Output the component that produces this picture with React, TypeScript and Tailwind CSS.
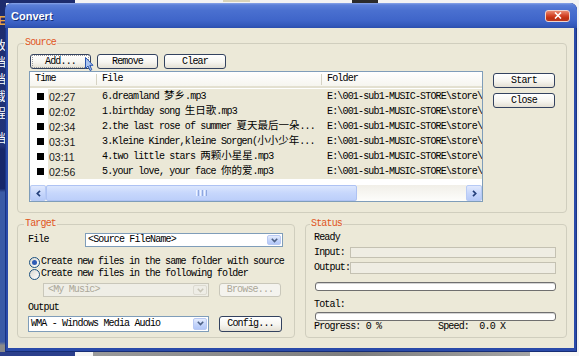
import React from "react";

const CJK = /([\u3000-\u9fff\uff00-\uffef]+)/;

function T({ s }: { s: string }) {
  const parts = s.split(CJK);
  return (
    <>
      {parts.map((p, i) =>
        /[\u3000-\u9fff\uff00-\uffef]/.test(p) ? (
          <span key={i} className="text-[10.5px] tracking-[0px]">
            {p}
          </span>
        ) : (
          <React.Fragment key={i}>{p}</React.Fragment>
        )
      )}
    </>
  );
}

const rows: [string, string][] = [
  ["02:27", "6.dreamland 梦乡.mp3"],
  ["02:02", "1.birthday song 生日歌.mp3"],
  ["02:34", "2.the last rose of summer 夏天最后一朵..."],
  ["03:31", "3.Kleine Kinder,kleine Sorgen(小小少年..."],
  ["03:11", "4.two little stars 两颗小星星.mp3"],
  ["02:56", "5.your love, your face 你的爱.mp3"],
];

function Btn({ className, children, disabled }: { className: string; children: React.ReactNode; disabled?: boolean }) {
  return (
    <div
      className={
        "flex items-center justify-center rounded-[3px] border shrink-0 " +
        (disabled
          ? "border-[#c9c7ba] bg-[#f4f3ee] text-[#aca899] "
          : "border-[#33425f] bg-[linear-gradient(to_bottom,#ffffff_0%,#f6f5f0_55%,#e4e0d4_100%)] text-black ") +
        className
      }
    >
      {children}
    </div>
  );
}

function DropBtn({ disabled }: { disabled?: boolean }) {
  return (
    <div
      className={
        "w-[14px] h-full rounded-[2px] border flex items-center justify-center shrink-0 " +
        (disabled
          ? "border-[#dcdad0] bg-[#eeede6]"
          : "border-[#b9c9f3] bg-[linear-gradient(to_bottom,#e6edfd_0%,#c6d6fb_50%,#b2c7f8_100%)]")
      }
    >
      <svg width="7" height="5" viewBox="0 0 7 5">
        <path d="M0.8 0.8 L3.5 3.6 L6.2 0.8" fill="none" stroke={disabled ? "#c9c6b8" : "#4d6185"} strokeWidth="1.6" />
      </svg>
    </div>
  );
}

function Radio({ checked }: { checked?: boolean }) {
  return (
    <div className="w-[11px] h-[11px] rounded-full border border-[#1c5180] bg-[linear-gradient(135deg,#d9d8d0,#ffffff)] flex items-center justify-center shrink-0">
      {checked && <div className="w-[5px] h-[5px] rounded-full bg-[#2d5bb5]" />}
    </div>
  );
}

function Group({ label, className, labelClass, children }: { label: string; className: string; labelClass: string; children: React.ReactNode }) {
  return (
    <div className={"border border-[#d0cebe] rounded-[4px] flex flex-col " + className}>
      <div className={"-mt-[7px] self-start px-[1px] bg-[#ece9d8] text-[#e0561e] leading-[12px] " + labelClass}>{label}</div>
      {children}
    </div>
  );
}

function ScrollArrow({ dir }: { dir: "l" | "r" }) {
  return (
    <div className="w-[16px] h-full rounded-[2px] border border-[#b7caf5] bg-[linear-gradient(to_bottom,#e1e9fd_0%,#c5d5fb_55%,#b6caf8_100%)] flex items-center justify-center shrink-0">
      <svg width="5" height="7" viewBox="0 0 5 7">
        <path d={dir === "l" ? "M4 0.8 L1.3 3.5 L4 6.2" : "M1 0.8 L3.7 3.5 L1 6.2"} fill="none" stroke="#233f7a" strokeWidth="1.7" />
      </svg>
    </div>
  );
}

export default function App() {
  return (
    <div className="relative w-[579px] h-[356px] overflow-hidden bg-[#f3f3f3] font-['Liberation_Mono','Noto_Sans_CJK_SC',monospace] text-[10px] leading-[12px] tracking-[-0.83px] text-black">
      {/* desktop background */}
      <div className="absolute left-0 top-0 w-[75px] h-[3px] bg-[#1d2c6d]" />
      <div className="absolute left-[223px] top-0 w-[27px] h-[2px] bg-[#d9d3b8]" />
      <div className="absolute left-[352px] top-0 w-[26px] h-[3px] bg-[#2b2b2b]" />
      <div className="absolute left-0 top-0 w-[6px] h-full overflow-hidden bg-[linear-gradient(to_bottom,#1d2c6d_0%,#213479_41%,#16276a_42%,#16276a_53%,#3a5aa6_54%,#3a5aa6_96%,#8a8a8a_97%)]">
        <div className="absolute right-0 top-[13px] flex flex-col items-end font-['Noto_Sans_CJK_SC',sans-serif] text-[12px] leading-[17px] tracking-normal text-white">
          <span className="font-['Liberation_Sans',sans-serif] font-bold text-[#e8a640]">E</span>
          <span className="mt-[6px]">改</span>
          <span>档</span>
          <span>档</span>
          <span>载</span>
          <span>程</span>
          <span className="mt-[8px]">档</span>
        </div>
      </div>
      <div className="absolute left-0 bottom-0 w-full h-[4px] flex">
        <div className="w-[75px] bg-[#2b3f8c]" />
        <div className="w-[18px] bg-[#f4f4f4]" />
        <div className="flex-1 bg-[linear-gradient(to_right,#9a9a9a,#7d7d7d_60%,#a5a5a5)]" />
        <div className="w-[49px] bg-[#f7f7f7]" />
      </div>

      {/* window */}
      <div className="absolute left-[5px] top-[3px] w-[572px] h-[349px] flex flex-col rounded-t-[7px] bg-[#2a4aa9] shadow-[inset_1px_0_0_#1a3585,inset_-1px_0_0_#1a3585,inset_0_-1px_0_#162d75]">
        <div className="h-[25px] shrink-0 rounded-t-[7px] bg-[linear-gradient(to_bottom,#8aa5e8_0%,#5b7fd8_8%,#4a70d0_30%,#3f65c9_70%,#3459bb_90%,#2c4fae_100%)] flex items-center justify-between pl-[6px] pr-[7px]">
          <span className="font-['Liberation_Sans',Arial,sans-serif] font-bold text-[11px] tracking-normal text-white [text-shadow:1px_1px_0_#14307a]">Convert</span>
          <div className="w-[25px] h-[12px] rounded-[3px] border border-[#f0d3cb] bg-[linear-gradient(to_bottom,#ea8a70_0%,#d4472a_45%,#c0300f_70%,#b83a22_100%)] flex items-center justify-center">
            <svg width="8" height="7" viewBox="0 0 8 7">
              <path d="M1 0.5 L7 6.5 M7 0.5 L1 6.5" stroke="white" strokeWidth="1.6" />
            </svg>
          </div>
        </div>

        <div className="flex-1 mx-[3px] mb-[4px] bg-[#ece9d8] flex flex-col pt-[15px] pl-[9px] pr-[7px]">
          {/* Source */}
          <Group label="Source" className="h-[170px]" labelClass="ml-[6px]">
            <div className="flex mt-[5px] pl-[11px]">
              <div className="flex flex-col w-[454px]">
                <div className="flex gap-[6px] ml-[1px] h-[15px]">
                  <Btn className="w-[61px] h-[15px]">
                    <span className="flex items-center justify-center w-[55px] h-[11px] outline outline-1 outline-dotted outline-[#9a9a9a]">Add...</span>
                  </Btn>
                  <Btn className="w-[61px] h-[15px]">Remove</Btn>
                  <Btn className="w-[62px] h-[15px]">Clear</Btn>
                </div>
                <div className="mt-[2px] h-[131px] w-[454px] border border-[#7f9db9] bg-white flex flex-col">
                  <div className="h-[16px] shrink-0 flex items-center border-b-[2px] border-[#e3e0d0] bg-[linear-gradient(to_bottom,#ffffff,#f6f5ef)]">
                    <div className="w-[66px] pl-[5px]">Time</div>
                    <div className="w-px h-[11px] bg-[#d6d3c4]" />
                    <div className="w-[224px] pl-[5px]">File</div>
                    <div className="w-px h-[11px] bg-[#d6d3c4]" />
                    <div className="pl-[5px]">Folder</div>
                  </div>
                  <div className="mt-[1px] flex flex-col">
                    {rows.map(([t, f]) => (
                      <div key={t + f} className="flex h-[15px] items-center">
                        <div className="w-[18px] h-full flex items-center pl-[7px] shrink-0">
                          <div className="w-[7px] h-[7px] bg-black" />
                        </div>
                        <div className="flex-1 h-full flex items-center bg-[#ebe8d7] overflow-hidden">
                          <div className="w-[49px] pl-[1px] shrink-0 font-['Liberation_Sans',Arial,sans-serif] text-[10.5px] tracking-normal text-[#1a1a1a]">{t}</div>
                          <div className="w-[225px] pl-[5px] shrink-0 whitespace-nowrap overflow-hidden">
                            <T s={f} />
                          </div>
                          <div className="flex-1 pl-[5px] whitespace-nowrap overflow-hidden">E:\001-sub1-MUSIC-STORE\store\</div>
                        </div>
                      </div>
                    ))}
                  </div>
                  <div className="flex-1" />
                  <div className="h-[16px] shrink-0 flex bg-[#f6f5f0]">
                    <ScrollArrow dir="l" />
                    <div className="w-[311px] h-full rounded-[2px] border border-[#aec2f3] bg-[linear-gradient(to_bottom,#dbe6fd_0%,#c7d7fc_50%,#bccffa_100%)] flex items-center justify-center gap-[1px] shrink-0">
                      <div className="w-px h-[6px] bg-[#eef3fe]" />
                      <div className="w-px h-[6px] bg-[#8fa7de]" />
                      <div className="w-px h-[6px] bg-[#eef3fe]" />
                      <div className="w-px h-[6px] bg-[#8fa7de]" />
                      <div className="w-px h-[6px] bg-[#eef3fe]" />
                      <div className="w-px h-[6px] bg-[#8fa7de]" />
                    </div>
                    <div className="flex-1 bg-[linear-gradient(to_bottom,#f1efe8,#fdfdfb)]" />
                    <ScrollArrow dir="r" />
                  </div>
                </div>
              </div>
              <div className="flex flex-col gap-[5px] ml-[10px] mt-[19px]">
                <Btn className="w-[62px] h-[15px]">Start</Btn>
                <Btn className="w-[62px] h-[15px]">Close</Btn>
              </div>
            </div>
          </Group>

          <div className="flex mt-[11px] gap-[10px] h-[114px]">
            {/* Target */}
            <Group label="Target" className="w-[278px] h-full" labelClass="ml-[6px]">
              <div className="flex flex-col pl-[10px] pr-[11px] mt-[3px]">
                <div className="flex items-center h-[14px]">
                  <div className="w-[57px]">File</div>
                  <div className="flex-1 h-full flex items-center border border-[#7f9db9] bg-white pl-[2px] p-[1px]">
                    <div className="flex-1 leading-[12px]">&lt;Source FileName&gt;</div>
                    <DropBtn />
                  </div>
                </div>
                <div className="mt-[9px] h-[12px] flex items-center ml-[1px]">
                  <Radio checked />
                  <span className="ml-[1px] whitespace-nowrap">Create new files in the same folder with source</span>
                </div>
                <div className="h-[12px] flex items-center ml-[1px]">
                  <Radio />
                  <span className="ml-[1px] whitespace-nowrap">Create new files in the following folder</span>
                </div>
                <div className="mt-[3px] h-[14px] flex ml-[15px]">
                  <div className="w-[166px] h-full flex items-center border border-[#c9c7ba] bg-[#efeee6] pl-[4px] p-[1px] text-[#aca899]">
                    <div className="flex-1">&lt;My Music&gt;</div>
                    <DropBtn disabled />
                  </div>
                  <Btn disabled className="w-[62px] h-[14px] ml-[10px]">Browse...</Btn>
                </div>
                <div className="mt-[5px] h-[12px]">Output</div>
                <div className="mt-[1px] h-[17px] flex items-center">
                  <div className="w-[181px] h-[16px] flex items-center border border-[#7f9db9] bg-white pl-[2px] p-[1px]">
                    <div className="flex-1 whitespace-nowrap">WMA - Windows Media Audio</div>
                    <DropBtn />
                  </div>
                  <Btn className="w-[63px] h-[16px] ml-[10px]">Config...</Btn>
                </div>
              </div>
            </Group>

            {/* Status */}
            <Group label="Status" className="flex-1 h-full" labelClass="ml-[4px]">
              <div className="flex flex-col pl-[8px] pr-[10px] mt-[2px]">
                <div className="h-[12px]">Ready</div>
                <div className="mt-[3px] h-[11px] flex items-center">
                  <div className="w-[36px]">Input:</div>
                  <div className="flex-1 h-full border border-[#c4c1b2] bg-[#efede3]" />
                </div>
                <div className="mt-[4px] h-[12px] flex items-center">
                  <div className="w-[36px] whitespace-nowrap">Output:</div>
                  <div className="flex-1 h-full border border-[#c4c1b2] bg-[#efede3]" />
                </div>
                <div className="mt-[8px] ml-[1px] h-[9px] rounded-[3px] border border-[#6f6f6f] bg-white shadow-[inset_0_1px_0_#d4d4d4]" />
                <div className="mt-[8px] h-[12px]">Total:</div>
                <div className="mt-[1px] ml-[1px] h-[9px] rounded-[3px] border border-[#6f6f6f] bg-white shadow-[inset_0_1px_0_#d4d4d4]" />
                <div className="h-[12px] flex whitespace-pre">
                  <div className="w-[124px]">Progress: 0 %</div>
                  <div>Speed:  0.0 X</div>
                </div>
              </div>
            </Group>
          </div>
        </div>
      </div>

      {/* mouse cursor */}
      <svg className="absolute left-[85px] top-[57px]" width="9" height="15" viewBox="0 0 9 15">
        <path d="M0.5 0.5 L0.5 11.5 L3 9 L5 13.5 L6.8 12.7 L4.8 8.3 L8 8.3 Z" fill="#a9c3f0" stroke="#2a56b0" strokeWidth="1" />
      </svg>
    </div>
  );
}
